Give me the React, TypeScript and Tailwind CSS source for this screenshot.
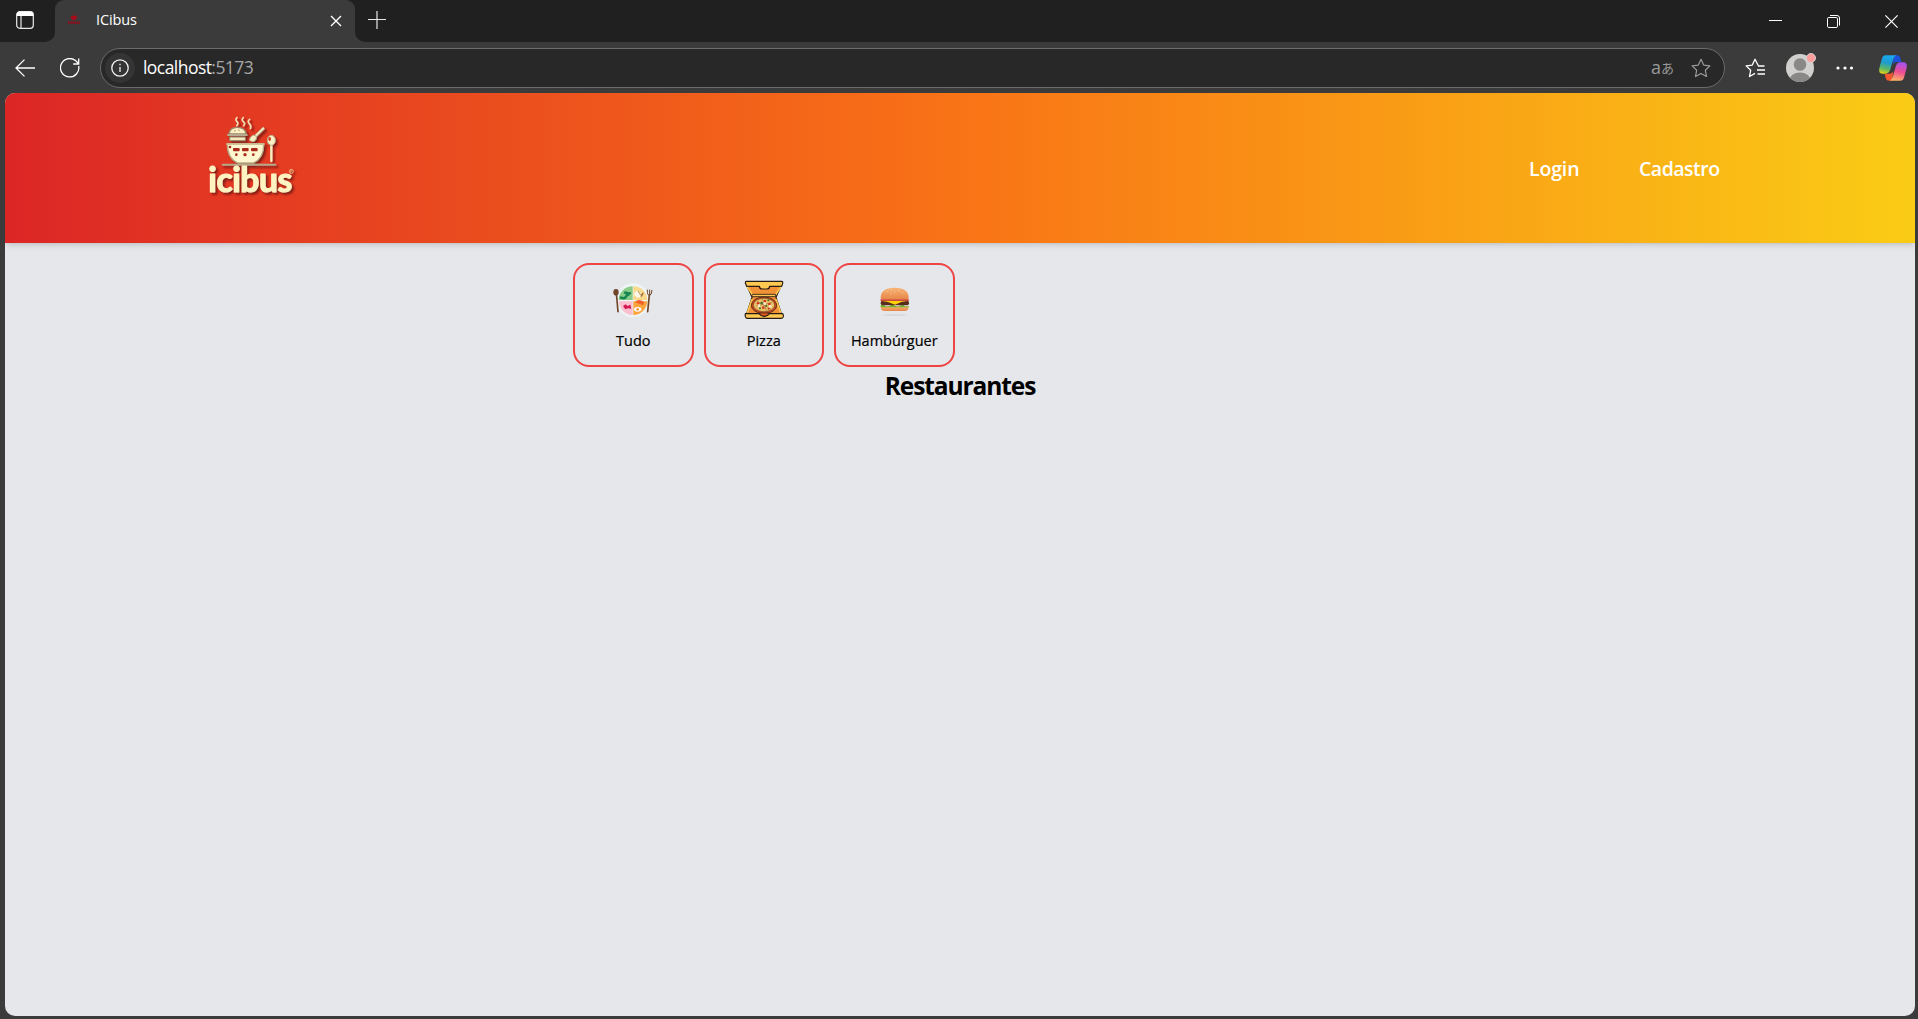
import React from "react";

const ui = "font-['Open_Sans','Noto_Sans',sans-serif]";

function TabBar() {
  return (
    <div className="flex h-[42px] bg-[#3b3b3b]">
      <div className="flex w-[55px] items-start rounded-br-[10px] bg-[#202020] pl-4 pt-[11px]">
        <svg width="18" height="18" viewBox="0 0 18 18" fill="none">
          <rect x="0.7" y="0.7" width="16.6" height="16.6" rx="3" stroke="#e8e8e8" strokeWidth="1.2" />
          <path d="M.7 5V3.5A2.8 2.8 0 0 1 3.5.7h11a2.8 2.8 0 0 1 2.8 2.8V5z" fill="#fff" />
          <path d="M5 5v12" stroke="#e8e8e8" strokeWidth="1.2" />
        </svg>
      </div>
      <div className="w-[300px] bg-[linear-gradient(#202020_50%,#3b3b3b_50%)]">
        <div className="flex h-[42px] items-center rounded-t-[9px] bg-[#3b3b3b] pb-0.5 pl-3 pr-[13px]">
          <svg width="14" height="12" viewBox="0 0 42 36" className="mb-0.5">
            <path d="M11 9h19q0 10-6 12h-7q-6-2-6-12z" fill="#a60d19" />
            <path d="M17 2l3 5m5-4 4 3" stroke="#a60d19" strokeWidth="3" />
            <path d="M3 29h36" stroke="#940b1a" strokeWidth="7" strokeDasharray="5 1.5" />
          </svg>
          <span className={`${ui} ml-[15px] w-[42px] whitespace-nowrap text-[14.5px] leading-none tracking-[-0.1px] text-white`}>ICibus</span>
          <svg className="ml-auto mt-0.5" width="12" height="12" viewBox="0 0 12 12">
            <path d="M1 1l10 10M11 1 1 11" stroke="#fff" strokeWidth="1.4" />
          </svg>
        </div>
      </div>
      <div className="flex flex-1 rounded-bl-[10px] bg-[#202020]">
        <svg className="ml-[13px] mt-[11px]" width="18" height="18" viewBox="0 0 18 18">
          <path d="M9 0v18M0 8.5h18" stroke="#e8e8e8" strokeWidth="1.2" />
        </svg>
        <div className="ml-auto mt-[15px] flex h-[14px] gap-[45px] pr-5">
          <svg width="13" height="14" viewBox="0 0 13 14"><path d="M0 5.5h13" stroke="#fff" /></svg>
          <svg width="13" height="14" viewBox="0 0 13 14" fill="none" stroke="#fff">
            <rect x=".5" y="2.5" width="10" height="10" rx="1.3" />
            <path d="M3 .5h7a2.5 2.5 0 0 1 2.5 2.5v7.5" />
          </svg>
          <svg width="13" height="14" viewBox="0 0 13 14"><path d="M.4.4l12.2 12.2M12.6.4.4 12.6" stroke="#fff" strokeWidth="1.2" /></svg>
        </div>
      </div>
    </div>
  );
}

function Copilot() {
  return (
    <svg width="28" height="26" viewBox="0 0 84 78">
      <defs>
        <linearGradient id="cpBlue" x1="0.3" y1="0" x2="0.1" y2="1">
          <stop offset="0" stopColor="#1aa8ee" />
          <stop offset=".35" stopColor="#1d9bd0" />
          <stop offset=".7" stopColor="#5cb866" />
          <stop offset="1" stopColor="#f5d30c" />
        </linearGradient>
        <linearGradient id="cpPink" x1="0.6" y1="0" x2="0.4" y2="1">
          <stop offset="0" stopColor="#a453f0" />
          <stop offset=".5" stopColor="#ee4d92" />
          <stop offset="1" stopColor="#fdb267" />
        </linearGradient>
      </defs>
      <path d="M45 1h10q7 0 9 9l3 11H53q-9 0-12 9z" fill="#1c52dc" />
      <path d="M39 77H29q-7 0-9-9l-3-12h14q9 0 12-9z" fill="#f5582e" />
      <path d="M20 1h31q-6 3-9 14L34 43q-4 13-15 13H9Q-2 54 1 40L9 10Q12 1 20 1z" fill="url(#cpBlue)" />
      <path d="M64 77H33q6-3 9-14l8-28q4-13 15-13h10q11 2 8 16l-8 30q-3 9-11 9z" fill="url(#cpPink)" />
    </svg>
  );
}

const star = "M10 1.3l2.7 5.8 6.2.8-4.6 4.3 1.2 6.3L10 15.4l-5.5 3.1 1.2-6.3L1.1 7.9l6.2-.8z";

function Toolbar() {
  return (
    <div className="flex h-[51px] items-center pl-[15px] pr-[11px]">
      <svg width="20" height="18" viewBox="0 0 20 18" fill="none" stroke="#fff" strokeWidth="1.3">
        <path d="M9.5.6 1 9l8.5 8.4M1 9h19" />
      </svg>
      <svg className="ml-[25px]" width="20" height="20" viewBox="0 0 20 20" fill="none" stroke="#fff" strokeWidth="1.3">
        <path d="M18.7 8A9.2 9.2 0 1 1 15.5 2.6L18.5 5.5M18.7 .5v5.5h-5.5" />
      </svg>
      <div className="ml-5 flex h-10 w-[1625px] items-center rounded-full border border-[#6b6b6b] bg-[#282828] pl-1 pr-[13px]">
        <div className="flex size-[30px] items-center justify-center rounded-full bg-[#343434]">
          <svg width="18" height="18" viewBox="0 0 18 18" fill="none" stroke="#f2f2f2" strokeWidth="1.3">
            <circle cx="9" cy="9" r="8.2" />
            <path d="M9 8v5M9 4.8v1.5" />
          </svg>
        </div>
        <div className={`${ui} ml-2 whitespace-nowrap text-[17.5px] leading-none tracking-[-0.55px] text-white`}>
          localhost<span className="text-[#a6a6a6]">:5173</span>
        </div>
        <div className="mb-0.5 ml-auto flex w-[22px] items-center whitespace-nowrap leading-none text-[#9a9a9a]">
          <span className="font-['Open_Sans',sans-serif] text-[18px] leading-none">a</span>
          <span className="mt-0.5 font-['Noto_Sans_CJK_JP',sans-serif] text-[13px] leading-none">あ</span>
        </div>
        <svg className="ml-[18px]" width="20" height="20" viewBox="0 0 20 20" fill="none" stroke="#9a9a9a" strokeWidth="1.2" strokeLinejoin="round"><path d={star} /></svg>
      </div>
      <svg className="ml-5" width="20" height="20" viewBox="0 0 20 20" fill="none" stroke="#fff" strokeWidth="1.3" strokeLinejoin="round">
        <path d="M19.5 8h-6L10 1.3 7.3 7.1l-6.2.8 4.6 4.3-1.2 6.3L10 15.4M12 12h8M12.5 16h7.5" />
      </svg>
      <svg className="ml-[20px]" width="32" height="30" viewBox="0 0 32 30">
        <defs><clipPath id="avatar"><circle cx="15" cy="15" r="14" /></clipPath></defs>
        <g clipPath="url(#avatar)">
          <path d="M0 0h32v30H0z" fill="#d2d0ce" />
          <circle cx="15" cy="11.5" r="6.3" fill="#8a8886" />
          <ellipse cx="15" cy="27" rx="10.5" ry="7.5" fill="#8a8886" />
        </g>
        <circle cx="26" cy="5" r="4.5" fill="#ff9d9d" stroke="#d2d0ce" strokeWidth="1" />
      </svg>
      <svg className="ml-[19px]" width="18" height="4" viewBox="0 0 18 4" fill="#fff">
        <circle cx="2" cy="2" r="1.6" /><circle cx="9" cy="2" r="1.6" /><circle cx="15.5" cy="2" r="1.6" />
      </svg>
      <div className="ml-auto"><Copilot /></div>
    </div>
  );
}

function Logo() {
  return (
    <svg width="120" height="110" viewBox="0 0 360 330" className="overflow-visible">
      <defs>
        <filter id="logoShadow" x="-10%" y="-10%" width="130%" height="130%">
          <feDropShadow dx="6" dy="6" stdDeviation="3" floodColor="#5e1008" floodOpacity=".75" />
        </filter>
      </defs>
      <g filter="url(#logoShadow)">
        <g fill="none" stroke="#f3dcb4" strokeWidth="5" strokeLinecap="round">
          <path d="M141 53q-6 6 0 12t-1 12" />
          <path d="M160 53q-7 6 0 12t1 12" />
          <path d="M179 58q-8 6-1 13t3 15" />
        </g>
        <path d="M117 102q2-20 25-20t27 20z" fill="#faf0c4" stroke="#9a8568" strokeWidth="4" />
        <path d="M114 105h56" stroke="#b5aa8d" strokeWidth="6" strokeLinecap="round" />
        <path d="M119 111h47v11h-47z" fill="#f5e8bc" stroke="#988267" strokeWidth="3" />
        <path d="M132 94l5-3M144 89l5 3" stroke="#bd8b60" strokeWidth="3" />
        <path d="M193 112l27-26" stroke="#b8a98a" strokeWidth="9" strokeLinecap="round" />
        <path d="M196 108l24-23" stroke="#faf0c4" strokeWidth="5" strokeLinecap="round" />
        <path d="M178 120q5-17 18-14 8 10-3 18-8 3-15-4z" fill="#faf0c4" stroke="#b8a98a" strokeWidth="3" />
        <path d="M244 133v50" stroke="#faf0c4" strokeWidth="7" strokeLinecap="round" />
        <ellipse cx="244" cy="121" rx="12" ry="15" fill="#faf0c4" stroke="#b8a98a" strokeWidth="3" />
        <ellipse cx="239" cy="117" rx="4" ry="6" fill="#cf3b20" />
        <path d="M112 132h109q1 43-31 57h-46q-32-14-32-57z" fill="#fff7d0" stroke="#baad88" strokeWidth="4" />
        <path d="M111 132h111" stroke="#d0c69c" strokeWidth="5" strokeLinecap="round" />
        <g fill="#a82b1a">
          <rect x="129" y="144" width="20" height="10" rx="3" />
          <rect x="156" y="144" width="20" height="10" rx="3" />
          <rect x="183" y="144" width="20" height="10" rx="3" />
          <circle cx="139" cy="164" r="4" /><circle cx="165" cy="164" r="5" /><circle cx="190" cy="164" r="4" />
          <circle cx="120" cy="141" r="4" />
        </g>
        <path d="M98 194h158" stroke="#b7a789" strokeWidth="6" strokeLinecap="round" />
        <text
          x="55" y="277" textLength="252" lengthAdjust="spacing"
          fontFamily="Lato, sans-serif" fontWeight="700" fontSize="101"
          fill="#fff3c2" stroke="#fff3c2" strokeWidth="3.5" strokeLinejoin="round"
        >icibus</text>
        <circle cx="304" cy="214" r="6" fill="none" stroke="#e9bd8c" strokeWidth="2.5" />
        <path d="M302 217v-5h4" stroke="#e9bd8c" strokeWidth="2" fill="none" />
      </g>
    </svg>
  );
}

function PlateIcon() {
  return (
    <svg width="40" height="40" viewBox="0 0 120 120">
      <circle cx="60" cy="61" r="51" fill="#edf4f5" />
      <path d="M59 60V19a42 42 0 0 0-42 41z" fill="#8acb88" />
      <path d="M61 60V19a42 42 0 0 1 42 41z" fill="#f9d98c" />
      <path d="M59 64v41a43 43 0 0 1-42-41z" fill="#fbc0cf" />
      <path d="M61 64v41a43 43 0 0 0 42-41z" fill="#fba43c" />
      <path d="M24 53q12 5 16-4t11-9M36 38q7-1 10 6" stroke="#158550" strokeWidth="7.5" fill="none" strokeLinecap="round" />
      <path d="M64 39q7-9 14-4l8 6-3 10-10 2-9-7z" fill="#fff8e8" />
      <path d="M83 52q-1-11 9-15-2 12-9 15z" fill="#9b6c35" />
      <path d="M75 33l8 12" stroke="#b88a55" strokeWidth="3" />
      <path d="M66 67q10-14 28 0l-4 9-10-4z" fill="#f1622b" />
      <ellipse cx="74" cy="88" rx="11" ry="7" fill="#fff" /><circle cx="74" cy="88" r="4" fill="#f4952a" />
      <path d="M30 78l8-5 5 5 9-4 3 12-10-1-8 3z" fill="#cf1855" />
      <g stroke="#70462b" strokeWidth="5" strokeLinecap="round" fill="none">
        <path d="M10 38l5 57M109 45l-5 50" />
        <path d="M103 30q-1 16 6 16t8-15M110 30v16" strokeWidth="3" />
      </g>
      <ellipse cx="9" cy="37" rx="8" ry="10" fill="#70462b" />
    </svg>
  );
}

function PizzaIcon() {
  return (
    <svg width="40" height="40" viewBox="0 0 120 120" strokeLinejoin="round">
      <path d="M9 18h102L96 52l17 52H7l17-52z" fill="#f29237" stroke="#241b16" strokeWidth="3.5" />
      <path d="M6 4h108q3 1 2 6l-3 9H77q-1 8-8 8H54q-7 0-8-8H8L4 9q0-5 2-5z" fill="#ffc851" stroke="#241b16" strokeWidth="3.5" />
      <path d="M10 21l17 26M110 21L93 47M24 58L10 98M96 58l14 40" fill="none" stroke="#ffc851" strokeWidth="5" />
      <path d="M25 43h70v7H23z" fill="#ffc851" stroke="#241b16" strokeWidth="2.5" />
      <ellipse cx="60" cy="76" rx="38" ry="25" fill="#c74a20" stroke="#4a2517" strokeWidth="2.5" />
      <ellipse cx="60" cy="75" rx="32" ry="20" fill="#e9c268" stroke="#67351d" strokeWidth="1.5" />
      <path d="M39 64l42 24M36 78l48-10M55 56l13 39" stroke="#8a5a30" strokeWidth="1.5" />
      <g fill="#cf3727"><circle cx="42" cy="70" r="4" /><circle cx="63" cy="63" r="4" /><circle cx="76" cy="72" r="4" /><circle cx="58" cy="83" r="4" /><circle cx="74" cy="86" r="3" /></g>
      <g fill="#43712b"><circle cx="53" cy="69" r="4" /><circle cx="48" cy="85" r="3" /><circle cx="67" cy="77" r="3" /><circle cx="73" cy="61" r="3" /></g>
      <g fill="#f8ead1"><circle cx="62" cy="71" r="4" /><circle cx="45" cy="77" r="4" /><circle cx="79" cy="79" r="4" /></g>
      <path d="M4 101h41q6 8 16 8t16-8h38q4 1 3 9-1 5-6 5H10q-8-1-6-14z" fill="#ffc851" stroke="#241b16" strokeWidth="3.5" />
      <path d="M46 99h30q-4 9-15 9t-15-9z" fill="#e95c21" stroke="#241b16" strokeWidth="2" />
    </svg>
  );
}

function BurgerIcon() {
  return (
    <svg width="40" height="40" viewBox="-2 0 120 120">
      <defs>
        <linearGradient id="bun" x2="0" y2="1">
          <stop stopColor="#f8b576" /><stop offset="1" stopColor="#e78649" />
        </linearGradient>
      </defs>
      <ellipse cx="60" cy="105" rx="35" ry="3" fill="#d8d9dd" />
      <path d="M18 78h84q1 15-12 15H30q-13 0-12-15z" fill="url(#bun)" />
      <path d="M17 77q7-5 14 0t15 0 15 0 15 0 13 0 14 0l-2 5H19z" fill="#6fb72c" />
      <rect x="18" y="62" width="85" height="14" rx="6" fill="#592c20" />
      <path d="M18 62h84l-22 4-19 8-21-8z" fill="#ffd108" />
      <path d="M19 60h82" stroke="#cd271c" strokeWidth="4" strokeLinecap="round" />
      <path d="M18 55Q17 23 60 23t42 32q0 3-5 3H23q-5 0-5-3z" fill="url(#bun)" />
      <g stroke="#ffe0ac" strokeWidth="2" strokeLinecap="round">
        <path d="M38 35l2-1M50 29h1M60 36h1M72 30l2 1M82 38l2 1M48 41h1" />
      </g>
    </svg>
  );
}

const categories = [
  { name: "Tudo", icon: <PlateIcon /> },
  { name: "Pizza", icon: <PizzaIcon /> },
  { name: "Hambúrguer", icon: <BurgerIcon /> },
];

export default function App() {
  return (
    <div className="flex h-[1019px] w-[1918px] flex-col overflow-hidden bg-[#3b3b3b]">
      <TabBar />
      <Toolbar />
      <div className={`${ui} ml-[5px] h-[923px] w-[1910px] overflow-hidden rounded-[10px] bg-[#e5e7eb]`}>
        <header className="flex h-[150px] items-start bg-[linear-gradient(to_right,#dc2626,#f97316,#facc15)] pl-[185px] pr-[197px] pt-[7px] shadow-md">
          <Logo />
          <nav className="ml-auto mt-[57px] flex gap-[60px] text-[19.5px] font-semibold leading-6 text-white">
            <a className="w-[50px] whitespace-nowrap tracking-[-0.15px]">Login</a>
            <a className="w-[79px] whitespace-nowrap tracking-[-0.5px]">Cadastro</a>
          </nav>
        </header>
        <main className="pt-5">
          <div className="ml-[568px] flex gap-[10px]">
            {categories.map((c) => (
              <button key={c.name} className="flex h-[104px] w-[120.5px] flex-col items-center rounded-2xl border-2 border-[#ef4444] pt-[15px]">
                {c.icon}
                <span className="mt-[9px] whitespace-nowrap text-[14.5px] font-medium leading-6 text-black [-webkit-text-stroke:0.2px_#000]">{c.name}</span>
              </button>
            ))}
          </div>
          <h2 className="mt-[3px] text-center text-[24.5px] font-bold leading-8 tracking-[-1.1px] text-black">Restaurantes</h2>
        </main>
      </div>
    </div>
  );
}
